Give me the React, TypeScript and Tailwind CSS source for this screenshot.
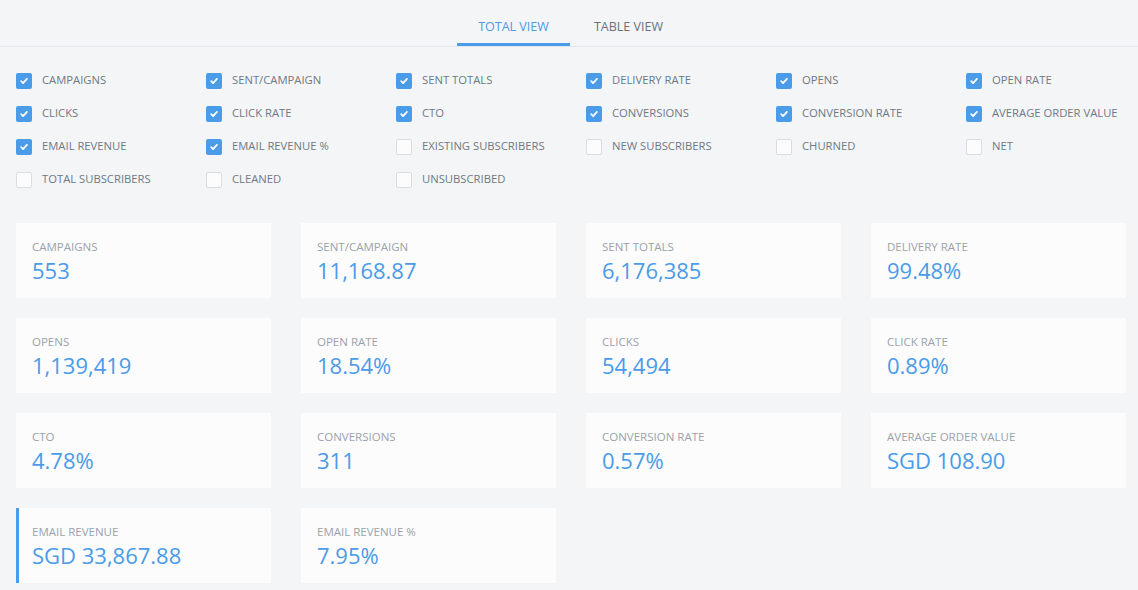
import React, { useState } from 'react';

const options: { label: string; checked: boolean }[] = [
  { label: 'Campaigns', checked: true },
  { label: 'Sent/Campaign', checked: true },
  { label: 'Sent Totals', checked: true },
  { label: 'Delivery Rate', checked: true },
  { label: 'Opens', checked: true },
  { label: 'Open Rate', checked: true },
  { label: 'Clicks', checked: true },
  { label: 'Click Rate', checked: true },
  { label: 'CTO', checked: true },
  { label: 'Conversions', checked: true },
  { label: 'Conversion Rate', checked: true },
  { label: 'Average Order Value', checked: true },
  { label: 'Email Revenue', checked: true },
  { label: 'Email Revenue %', checked: true },
  { label: 'Existing Subscribers', checked: false },
  { label: 'New Subscribers', checked: false },
  { label: 'Churned', checked: false },
  { label: 'Net', checked: false },
  { label: 'Total Subscribers', checked: false },
  { label: 'Cleaned', checked: false },
  { label: 'Unsubscribed', checked: false },
];

const stats = [
  { label: 'Campaigns', value: '553' },
  { label: 'Sent/Campaign', value: '11,168.87' },
  { label: 'Sent Totals', value: '6,176,385' },
  { label: 'Delivery Rate', value: '99.48%' },
  { label: 'Opens', value: '1,139,419' },
  { label: 'Open Rate', value: '18.54%' },
  { label: 'Clicks', value: '54,494' },
  { label: 'Click Rate', value: '0.89%' },
  { label: 'CTO', value: '4.78%' },
  { label: 'Conversions', value: '311' },
  { label: 'Conversion Rate', value: '0.57%' },
  { label: 'Average Order Value', value: 'SGD 108.90' },
  { label: 'Email Revenue', value: 'SGD 33,867.88' },
  { label: 'Email Revenue %', value: '7.95%' },
];

const Check: React.FC<{ checked: boolean }> = ({ checked }) =>
  checked ? (
    <span className="flex h-4 w-4 items-center justify-center rounded-[2px] bg-[#4a9be8]">
      <svg width="10" height="10" viewBox="0 0 10 10" fill="none">
        <path d="M2.2 5.2 4.1 7.1 7.9 2.9" stroke="#fff" strokeWidth="1.8" strokeLinecap="round" strokeLinejoin="round" />
      </svg>
    </span>
  ) : (
    <span className="h-4 w-4 rounded-[2px] border border-[#d9dde2] bg-[#fcfcfd]" />
  );

const App: React.FC = () => {
  const [tab, setTab] = useState<'total' | 'table'>('total');
  const [checks, setChecks] = useState(options.map((o) => o.checked));

  return (
    <div
      className="min-h-[590px] w-full bg-[#f4f5f6] pb-4"
      style={{ fontFamily: '"Open Sans", "Noto Sans", sans-serif' }}
    >
      {/* tabs */}
      <div className="flex justify-center border-b border-[#e4e6e9] pl-[6px]">
        <button
          onClick={() => setTab('total')}
          className={`h-[46px] w-[113px] border-b-[3px] pt-[11px] text-[12.5px] uppercase ${
            tab === 'total' ? 'border-[#4a9be8] text-[#4a9be8]' : 'border-transparent text-[#69727d]'
          }`}
        >
          Total View
        </button>
        <button
          onClick={() => setTab('table')}
          className={`h-[46px] w-[117px] border-b-[3px] pt-[11px] text-[12.5px] uppercase ${
            tab === 'table' ? 'border-[#4a9be8] text-[#4a9be8]' : 'border-transparent text-[#69727d]'
          }`}
        >
          Table View
        </button>
      </div>

      {/* metric toggles */}
      <div className="grid grid-cols-[repeat(6,190px)] px-4 pt-[17px]">
        {options.map((o, i) => (
          <label
            key={o.label}
            className="flex h-[33px] cursor-pointer items-center gap-[10px]"
            onClick={() => setChecks(checks.map((c, j) => (j === i ? !c : c)))}
          >
            <Check checked={checks[i]} />
            <span className="text-[11.25px] uppercase text-[#6e7986]">{o.label}</span>
          </label>
        ))}
      </div>

      {/* stat cards */}
      <div className="grid grid-cols-4 gap-x-[30px] gap-y-[20px] pl-4 pr-3 pt-[27px]">
        {stats.map((s, i) => (
          <div
            key={s.label}
            className={`h-[75px] bg-[#fcfcfd] pt-[16px] ${i === 12 ? 'border-l-[3px] border-[#4a9be8] pl-[13px]' : 'pl-4'}`}
          >
            <div className="text-[11.5px] uppercase leading-4 text-[#9aa2ab]">{s.label}</div>
            <div className="text-[22px] leading-[30px] text-[#4a9be8]">{s.value}</div>
          </div>
        ))}
      </div>
    </div>
  );
};

export default App;
